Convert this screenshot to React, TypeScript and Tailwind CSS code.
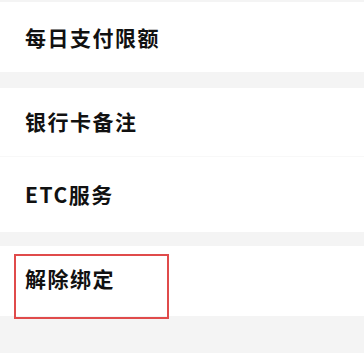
const ROW_TEXT = "text-[21px] font-bold tracking-[1.5px] text-[#111111] leading-none"

function Row({ label, className }: { label: string; className: string }) {
  return (
    <div className={`flex items-center bg-white pl-[25px] ${className}`}>
      <span className={ROW_TEXT}>{label}</span>
    </div>
  )
}

export default function App() {
  return (
    <div
      className="h-[353px] w-[364px] overflow-hidden bg-[#f4f4f4] pt-[2px]"
      style={{ fontFamily: '"Noto Sans CJK SC", "Noto Sans", sans-serif' }}
    >
      <Row label="每日支付限额" className="h-[70px]" />

      <div className="mt-[16px]">
        <Row label="银行卡备注" className="h-[68px] pb-[2px]" />
        <div className="h-px bg-[#f8f8f8]" />
        <Row label="ETC服务" className="h-[75px]" />
      </div>

      <div className="relative mt-[14px]">
        <Row label="解除绑定" className="h-[70px] pb-[6px]" />
        <div className="pointer-events-none absolute left-[14px] top-[8px] h-[65px] w-[155px] border-2 border-[#e04b4b]" />
      </div>
    </div>
  )
}
